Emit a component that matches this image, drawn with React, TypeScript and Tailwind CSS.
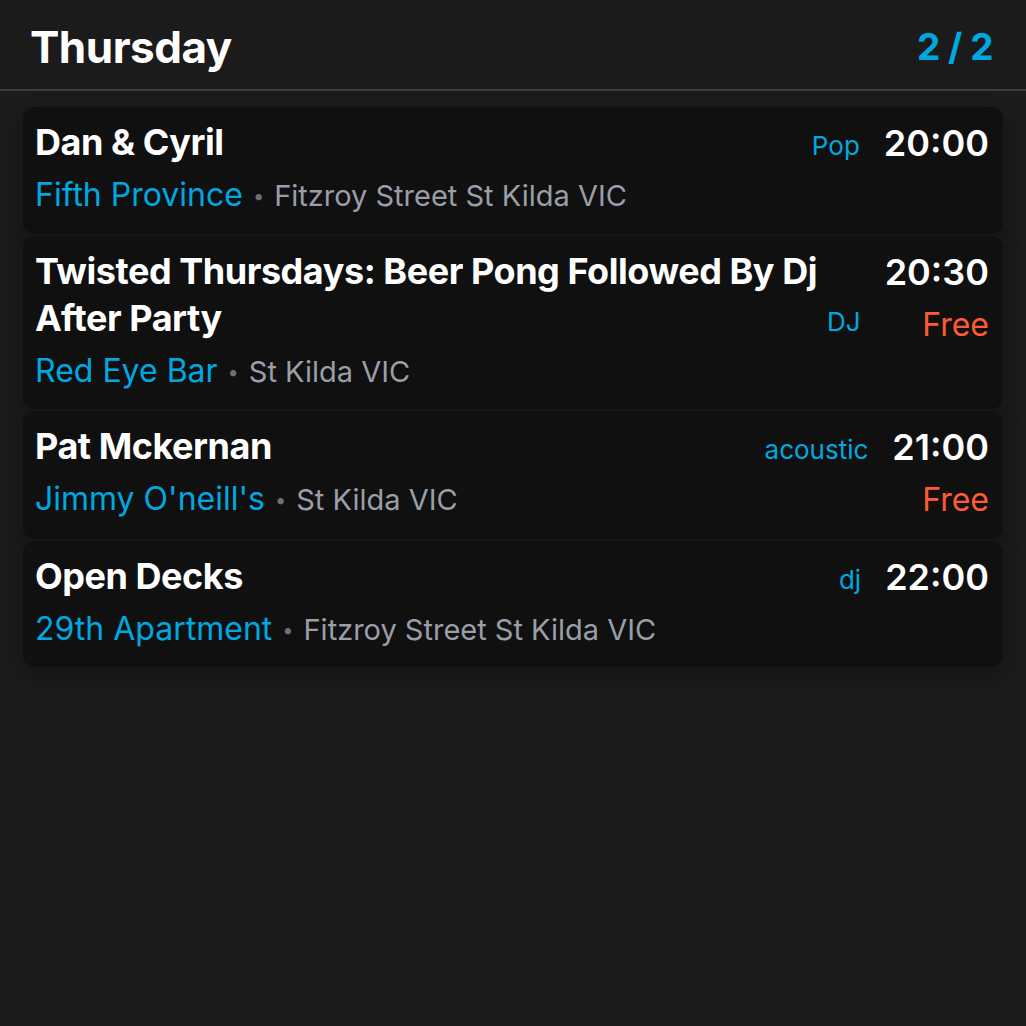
const events = [
  { title: "Dan & Cyril", venue: "Fifth Province", address: "Fitzroy Street St Kilda VIC", genre: "Pop", time: "20:00", free: false },
  { title: "Twisted Thursdays: Beer Pong Followed By Dj After Party", venue: "Red Eye Bar", address: "St Kilda VIC", genre: "DJ", time: "20:30", free: true },
  { title: "Pat Mckernan", venue: "Jimmy O'neill's", address: "St Kilda VIC", genre: "acoustic", time: "21:00", free: true },
  { title: "Open Decks", venue: "29th Apartment", address: "Fitzroy Street St Kilda VIC", genre: "dj", time: "22:00", free: false },
];

export default function App() {
  return (
    <div className="min-h-screen bg-[#1b1b1b] font-['Inter','Noto_Sans',sans-serif] text-white">
      <header className="flex items-center justify-between border-b-2 border-[#383c45] pl-[30px] pr-[33px] pt-[20px] pb-[15px]">
        <h1 className="text-[44px] leading-[54px] font-bold tracking-[-0.5px]">Thursday</h1>
        <span className="text-[37px] leading-[54px] font-bold tracking-[-0.5px] text-[#00a8e0]">2 / 2</span>
      </header>

      <div className="flex flex-col gap-[2px] px-[23px] pt-[16px]">
        {events.map((e) => (
          <div key={e.title} className="flex gap-6 rounded-xl bg-[#101010] pl-3 pr-[14px] pt-3 pb-[13.5px] shadow-[0_8px_20px_rgba(0,0,0,0.25)]">
            <div className="min-w-0 flex-1">
              <div className="flex items-end gap-1">
                <h2 className="flex-1 text-[36px] leading-[47px] font-bold tracking-[-0.45px]">{e.title}</h2>
                <span className="text-[26px] leading-[40px] text-[#00a8e0]">{e.genre}</span>
              </div>
              <div className="mt-[5px] text-[32px] leading-[48px]">
                <span className="text-[#00a8e0]">{e.venue}</span>
                <span className="mx-[10px] align-[3px] text-[20px] text-[#6b7079]">•</span>
                <span className="text-[29px] text-[#9a9ea8]">{e.address}</span>
              </div>
            </div>
            <div className="flex flex-col items-end">
              <span className="text-[36px] leading-[49px] font-semibold">{e.time}</span>
              {e.free && <span className="mt-[3px] text-[32px] leading-[50px] text-[#ff5a36]">Free</span>}
            </div>
          </div>
        ))}
      </div>
    </div>
  );
}
